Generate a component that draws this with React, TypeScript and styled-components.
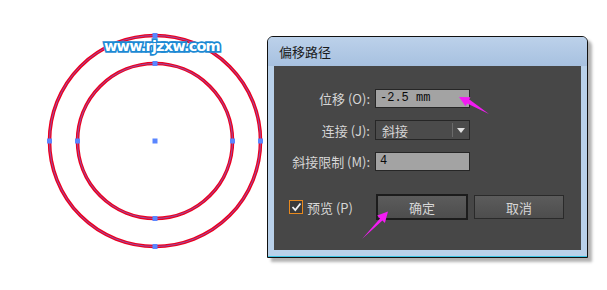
import styled, { createGlobalStyle } from 'styled-components';

const GlobalStyle = createGlobalStyle`
  html, body {
    margin: 0;
    padding: 0;
    background: #ffffff;
  }
  body {
    font-family: "Noto Sans CJK SC", "Liberation Sans", sans-serif;
  }
`;

const Colors = {
  panel: '#474747',
  field: '#a3a3a3',
  fieldBorder: '#262626',
  label: '#d6d6d6',
  frame: '#b9d1ea',
  magenta: '#f21cf2',
};

const Page = styled.div`
  position: relative;
  display: flex;
  align-items: flex-start;
  width: 607px;
  height: 290px;
  overflow: hidden;
`;

const Canvas = styled.div`
  position: relative;
  width: 267px;
  height: 290px;
  flex-shrink: 0;
`;

const Watermark = styled.span`
  position: absolute;
  left: 104px;
  top: 38px;
  font-family: "DejaVu Sans", Verdana, sans-serif;
  font-weight: bold;
  font-size: 14.5px;
  letter-spacing: -0.8px;
  color: #ffffff;
  -webkit-text-stroke: 3.5px #1c8ad4;
  paint-order: stroke fill;
`;

const Window = styled.div`
  margin-top: 36px;
  width: 319px;
  height: 220px;
  display: flex;
  flex-direction: column;
  border: 1px solid #111;
  border-radius: 6px 6px 0 0;
  background: ${Colors.frame};
  box-shadow: inset 0 -1px 0 #3cc4e4, 4px 4px 3px rgba(0, 0, 0, 0.3);
`;

const TitleBar = styled.div`
  height: 29px;
  display: flex;
  align-items: center;
  padding-left: 11px;
  border-radius: 5px 5px 0 0;
  background: linear-gradient(#bcd1ea, #a7c1e0);
  font-size: 13px;
  color: #1a1a1a;
`;

const Panel = styled.div`
  margin: 0 6px 7px;
  flex: 1;
  background: ${Colors.panel};
  padding-top: 23px;
  display: flex;
  flex-direction: column;
`;

const Form = styled.div`
  display: grid;
  grid-template-columns: 96px 95px;
  column-gap: 5px;
  row-gap: 12px;
  align-items: center;
`;

const Label = styled.span`
  text-align: right;
  font-size: 13px;
  color: ${Colors.label};
  white-space: nowrap;
`;

const Field = styled.div`
  height: 17px;
  border: 1px solid ${Colors.fieldBorder};
  background: ${Colors.field};
  font-family: "Liberation Mono", monospace;
  font-size: 12px;
  line-height: 17px;
  padding-left: 4px;
  color: #0a0a0a;
`;

const Select = styled.div`
  height: 18px;
  border: 1px solid ${Colors.fieldBorder};
  background: #4b4b4b;
  display: flex;
  align-items: center;
  font-size: 13px;
  color: ${Colors.label};
`;

const SelectText = styled.span`
  flex: 1;
  padding-left: 6px;
`;

const SelectArrow = styled.span`
  width: 16px;
  height: 14px;
  border-left: 1px solid #6a6a6a;
  display: flex;
  align-items: center;
  justify-content: center;
  &::after {
    content: '';
    border-left: 4px solid transparent;
    border-right: 4px solid transparent;
    border-top: 5px solid #e0e0e0;
  }
`;

const Footer = styled.div`
  margin-top: 23px;
  display: flex;
  align-items: center;
`;

const Check = styled.label`
  display: flex;
  align-items: center;
  gap: 4px;
  margin-left: 15px;
  width: 87px;
  font-size: 13px;
  color: ${Colors.label};
`;

const Box = styled.span`
  width: 12px;
  height: 12px;
  border: 1px solid #e8891d;
  background: #3a3a3a;
  display: flex;
  align-items: center;
  justify-content: center;
`;

const Button = styled.div<{ $focused?: boolean }>`
  box-sizing: border-box;
  width: ${p => (p.$focused ? 92 : 90)}px;
  height: ${p => (p.$focused ? 26 : 24)}px;
  margin-left: ${p => (p.$focused ? 0 : 6)}px;
  border: ${p => (p.$focused ? 2 : 1)}px solid ${p => (p.$focused ? '#1c1c1c' : '#2a2a2a')};
  background: linear-gradient(#5c5c5c, #4d4d4d);
  display: flex;
  align-items: center;
  justify-content: center;
  font-size: 13px;
  color: ${Colors.label};
`;

const Overlay = styled.svg`
  position: absolute;
  left: 0;
  top: 0;
  pointer-events: none;
`;

function Circles () {
  const cx = 155;
  const cy = 141;
  const radii = [105.5, 77.5];
  const anchors: [number, number][] = [[cx, cy]];
  radii.forEach(r => {
    anchors.push([cx, cy - r], [cx, cy + r], [cx - r, cy], [cx + r, cy]);
  });

  return (
    <svg width='267' height='290'>
      {radii.map(r => (
        <g key={r}>
          <circle cx={cx} cy={cy} r={r} fill='none' stroke='#ec0020' strokeWidth='3.6' />
          <circle cx={cx} cy={cy} r={r} fill='none' stroke='#5a86ff' strokeWidth='0.6' />
        </g>
      ))}
      {anchors.map(([x, y], i) => (
        <rect key={i} x={x - 2.5} y={y - 2.5} width='5' height='5' fill='#5a86ff' />
      ))}
    </svg>
  );
}

function App () {
  return (
    <>
      <GlobalStyle />
      <Page>
        <Canvas>
          <Circles />
          <Watermark>www.rjzxw.com</Watermark>
        </Canvas>
        <Window>
          <TitleBar>偏移路径</TitleBar>
          <Panel>
            <Form>
              <Label>位移 (O):</Label>
              <Field>-2.5 mm</Field>
              <Label>连接 (J):</Label>
              <Select>
                <SelectText>斜接</SelectText>
                <SelectArrow />
              </Select>
              <Label>斜接限制 (M):</Label>
              <Field>4</Field>
            </Form>
            <Footer>
              <Check>
                <Box>
                  <svg width='11' height='10' viewBox='0 0 11 10'>
                    <path d='M1.5 5 L4.3 8 L9.5 1.5' fill='none' stroke='#f0f0f0' strokeWidth='1.8' />
                  </svg>
                </Box>
                预览 (P)
              </Check>
              <Button $focused>确定</Button>
              <Button>取消</Button>
            </Footer>
          </Panel>
        </Window>
        <Overlay width='607' height='290'>
          <polygon
            points='459,97 465.5,106.3 467.2,103.4 489,114 469.4,99.6 470.4,97.2'
            fill={Colors.magenta}
          />
          <polygon
            points='388,211.5 377.2,215.6 380,218.4 362,239 382.4,220.4 384.9,223'
            fill={Colors.magenta}
          />
        </Overlay>
      </Page>
    </>
  );
}

export default App;
